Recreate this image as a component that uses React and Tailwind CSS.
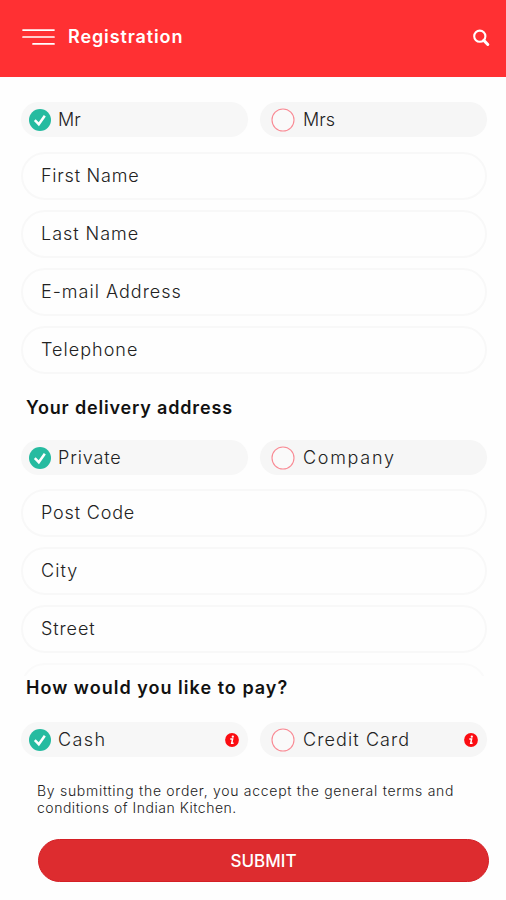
function Check() {
  return (
    <svg className="h-[22px] w-[22px] shrink-0" viewBox="0 0 22 22" fill="none">
      <circle cx="11" cy="11" r="11" fill="#26bba0" />
      <path d="M5.8 11.2 9.8 15.2 15.8 6.8" stroke="#fff" strokeWidth="2.5" />
    </svg>
  );
}

function Ring() {
  return (
    <svg className="h-6 w-6 shrink-0" viewBox="0 0 24 24" fill="none">
      <circle cx="12" cy="12" r="11" fill="#fafafa" stroke="#f98a94" strokeWidth="1.1" />
    </svg>
  );
}

function Info() {
  return (
    <svg className="ml-auto h-3.5 w-3.5 shrink-0" viewBox="0 0 14 14" fill="none">
      <circle cx="7" cy="7" r="6.9" fill="#fb0d12" />
      <circle cx="7.8" cy="3.7" r="1.15" fill="#fff" />
      <path d="M5.3 6H7.6L6.7 10.3H8.6" stroke="#fff" strokeWidth="1.5" />
    </svg>
  );
}

function Option({ label, checked, info, spacing }) {
  return (
    <div
      className={
        "flex h-[35px] w-[227px] items-center rounded-full " +
        (checked ? "bg-[#f7f7f7] pl-2 pr-[9px]" : "bg-[#f6f6f6] pl-[11px] pr-[9px]")
      }
    >
      {checked ? <Check /> : <Ring />}
      <span className={"whitespace-nowrap text-[18px] leading-6 text-[#222] " + (checked ? "ml-[7px] " : "ml-2 ") + spacing}>
        {label}
      </span>
      {info && <Info />}
    </div>
  );
}

function Field({ label, spacing }) {
  return (
    <div className="flex h-12 items-center rounded-full border-2 border-[#f8f8f8] pl-[18px]">
      <span className={"whitespace-nowrap text-[18px] leading-6 text-[#222] " + spacing}>{label}</span>
    </div>
  );
}

export default function App() {
  return (
    <div className="h-[900px] w-[506px] overflow-hidden bg-[#fefefe] font-['Inter',sans-serif] font-light">
      <header className="flex h-[77px] items-center bg-[#ff3033] pl-[22px] pr-4">
        <svg className="mt-[-4px] h-5 w-[33px]" viewBox="0 0 33 20" stroke="#fff" strokeWidth="1.7" strokeLinecap="round">
          <path d="M1 3.1H32M1 10H32M11 16.9H32" />
        </svg>
        <h1 className="ml-[13px] mt-[-3px] text-[18px] font-semibold leading-6 tracking-[0.88px] text-white">Registration</h1>
        <svg className="ml-auto mt-[-2px] h-[18px] w-[18px]" viewBox="0 0 18 18" fill="none" stroke="#fff">
          <circle cx="7.8" cy="7.2" r="5.6" strokeWidth="2.1" />
          <path d="M11.8 11.4 15.8 15.5" strokeWidth="3" strokeLinecap="round" />
        </svg>
      </header>

      <main className="pl-[21px] pr-[19px] pt-[25px]">
        <div className="flex gap-3">
          <Option label="Mr" checked spacing="tracking-[0px]" />
          <Option label="Mrs" spacing="tracking-[0px]" />
        </div>
        <div className="mt-[15px] flex flex-col gap-2.5">
          <Field label="First Name" spacing="tracking-[0.77px]" />
          <Field label="Last Name" spacing="tracking-[0.97px]" />
          <Field label="E-mail Address" spacing="tracking-[1px]" />
          <Field label="Telephone" spacing="tracking-[1.02px]" />
        </div>

        <h2 className="ml-[5px] mt-[22px] text-[18px] font-semibold leading-6 tracking-[0.83px] text-[#111]">Your delivery address</h2>
        <div className="mt-5 flex gap-3">
          <Option label="Private" checked spacing="tracking-[0.85px]" />
          <Option label="Company" spacing="tracking-[1.7px]" />
        </div>
        <div className="mt-[14px] flex flex-col gap-2.5">
          <Field label="Post Code" spacing="tracking-[0.83px]" />
          <Field label="City" spacing="tracking-[1.1px]" />
          <Field label="Street" spacing="tracking-[0.9px]" />
        </div>
        <div className="mt-2.5 h-[13px] overflow-hidden">
          <div className="h-12 rounded-full border-2 border-[#fafafa]" />
        </div>

        <h2 className="ml-[5px] text-[18px] font-semibold leading-6 tracking-[1.02px] text-[#111]">How would you like to pay?</h2>
        <div className="mt-[22px] flex gap-3">
          <Option label="Cash" checked info spacing="tracking-[1.4px]" />
          <Option label="Credit Card" info spacing="tracking-[1.1px]" />
        </div>

        <p className="ml-4 mt-[25px] whitespace-nowrap text-[14px] leading-[17px] text-[#222]">
          <span className="tracking-[0.71px]">By submitting the order, you accept the general terms and</span>
          <br />
          <span className="tracking-[0.52px]">conditions of Indian Kitchen.</span>
        </p>
        <button className="ml-[17px] mt-[23px] block h-[43px] w-[451px] rounded-full border border-[#d41f25] bg-[#dd2c2f] text-[17px] font-medium leading-6 text-white">
          SUBMIT
        </button>
      </main>
    </div>
  );
}
